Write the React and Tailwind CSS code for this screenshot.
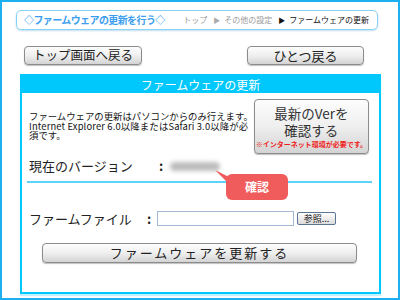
import React from 'react';

const font = { fontFamily: '"Noto Sans CJK JP", "Liberation Sans", sans-serif' };

const GrayButton = ({ className = '', children }) => (
  <div
    className={`flex items-center justify-center rounded-[4px] border border-[#8c8c8c] bg-gradient-to-b from-[#fdfdfd] via-[#efefef] to-[#d4d4d4] text-[#222] shadow-[0_1px_1px_rgba(0,0,0,0.25)] ${className}`}
  >
    {children}
  </div>
);

const App = () => {
  return (
    <div style={font} className="relative w-[400px] h-[300px] border-2 border-[#1cb0f0] bg-white flex flex-col">
      {/* page title + breadcrumb */}
      <div className="mt-[8px] ml-[14px] w-[362px] h-[20px] rounded-[5px] border-[1.5px] border-[#86d3f6] shadow-[0_1px_2px_rgba(0,120,200,0.25)] flex items-center justify-between pl-[7px] pr-[8px]">
        <span className="text-[10px] font-bold text-[#3d9ef0] leading-none tracking-[-0.6px]">◇ファームウェアの更新を行う◇</span>
        <span className="flex items-center text-[8px] leading-none text-[#9a9a9a] whitespace-nowrap">
          <span>トップ</span>
          <span className="ml-[6px] mr-[4px] text-[7px] text-[#aaa]">▶</span>
          <span>その他の設定</span>
          <span className="ml-[6px] mr-[4px] text-[7px] text-[#111]">▶</span>
          <span className="text-[#111]">ファームウェアの更新</span>
        </span>
      </div>

      {/* back buttons */}
      <div className="mt-[16px] ml-[22px] flex gap-[105px]">
        <GrayButton className="w-[118px] h-[19px] text-[12.5px]">トップ画面へ戻る</GrayButton>
        <GrayButton className="w-[117px] h-[19px] text-[13px]">ひとつ戻る</GrayButton>
      </div>

      {/* firmware panel */}
      <div className="mt-[9px] ml-[18px] w-[361px] h-[220px] border-2 border-[#00c8fc] shadow-[0_2px_1px_rgba(0,200,252,0.25)] flex flex-col">
        <div className="h-[17px] bg-[#00c8fc] text-white text-[12px] leading-[17px] text-center">ファームウェアの更新</div>

        <div className="pt-[6px] flex">
          <p className="ml-[7px] mt-[13px] w-[226px] text-[9.4px] leading-[9.5px] text-[#111] whitespace-nowrap">
            ファームウェアの更新はパソコンからのみ行えます。
            <br />
            <span className="tracking-[0.15px]">Internet Explorer 6.0以降またはSafari 3.0以降が必</span>
            <br />
            須です。
          </p>
          <GrayButton className="ml-auto mr-[10px] w-[116px] h-[55px] flex-col text-[#333]">
            <span className="text-[13.5px] leading-[17px]">最新のVerを</span>
            <span className="text-[13.5px] leading-[17px]">確認する</span>
            <span className="mt-[1px] text-[7px] leading-[9px] font-bold text-[#f02020]">※インターネット環境が必要です。</span>
          </GrayButton>
        </div>

        <div className="mt-[4px] h-[16px] flex items-center text-[13px] text-[#222]">
          <span className="pl-[7px] w-[137px]">現在のバージョン</span>
          <span className="w-[11px] font-bold">:</span>
          <div className="w-[50px] h-[9px] rounded-full bg-[#bcbcbc] blur-[2px]" />
        </div>

        <div className="mt-[7px] ml-[5px] w-[345px] h-[2px] bg-[#5fd3f6]" />

        <div className="mt-[28px] h-[15px] flex items-center text-[13px] text-[#222]">
          <span className="pl-[7px] w-[125px]">ファームファイル</span>
          <span className="w-[10px] font-bold">:</span>
          <div className="w-[137px] h-[15px] border border-[#a3b8d2] bg-white" />
          <div className="ml-[3px] w-[39px] h-[13px] rounded-[2px] border border-[#5a7594] bg-gradient-to-b from-[#ffffff] to-[#dcdcdc] text-[9px] leading-[11px] text-center text-[#111]">
            参照...
          </div>
        </div>

        <GrayButton className="mt-[17px] ml-[20px] w-[315px] h-[20px] text-[13px] tracking-[2px]">
          ファームウェアを更新する
        </GrayButton>
      </div>

      {/* callout */}
      <div className="absolute left-[224px] top-[172px] w-[62px] h-[26px] rounded-[6px] bg-[#f05b5c] text-white text-[12px] font-bold flex items-center justify-center">
        確認
      </div>
      <svg className="absolute left-[213px] top-[168px]" width="16" height="12" viewBox="0 0 16 12">
        <polygon points="0,0 16,8 12,12" fill="#f05b5c" />
      </svg>
    </div>
  );
};

export default App;
